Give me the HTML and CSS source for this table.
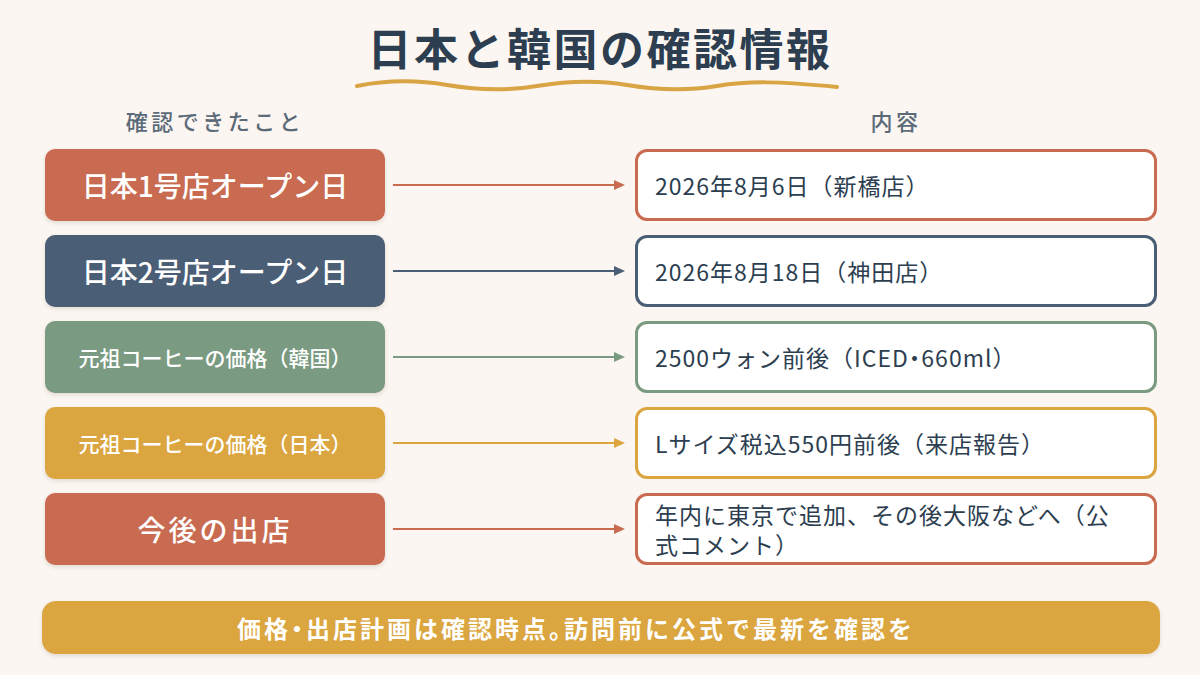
FILE: index.html
```html
<!DOCTYPE html>
<html lang="ja">
<head>
<meta charset="utf-8">
<title>日本と韓国の確認情報</title>
<link rel="stylesheet" href="styles.css">
</head>
<body>
<div class="page">
  <header class="head">
    <h1 class="title">日本と韓国の確認情報</h1>
    <svg class="wave" width="486" height="14" viewBox="0 0 486 14" aria-hidden="true">
      <path d="M3 7 C 33 1, 63 1, 93 6 S 153 12, 183 7 S 243 1, 273 6 S 333 12, 363 7 S 423 2, 483 8" fill="none" stroke="#d9a443" stroke-width="4" stroke-linecap="round"/>
    </svg>
  </header>

  <div class="grid">
    <div class="col-head">確認できたこと</div>
    <div></div>
    <div class="col-head">内容</div>

    <div class="label c-terra">日本1号店オープン日</div>
    <div class="arrow a-terra"><span class="line"></span><span class="head-tri"></span></div>
    <div class="value b-terra">2026年8月6日（新橋店）</div>

    <div class="label c-slate">日本2号店オープン日</div>
    <div class="arrow a-slate"><span class="line"></span><span class="head-tri"></span></div>
    <div class="value b-slate">2026年8月18日（神田店）</div>

    <div class="label small c-sage">元祖コーヒーの価格（韓国）</div>
    <div class="arrow a-sage"><span class="line"></span><span class="head-tri"></span></div>
    <div class="value b-sage"><span>2500ウォン前後（ICED<span class="half">・</span>660ml）</span></div>

    <div class="label small c-gold">元祖コーヒーの価格（日本）</div>
    <div class="arrow a-gold"><span class="line"></span><span class="head-tri"></span></div>
    <div class="value b-gold">Lサイズ税込550円前後（来店報告）</div>

    <div class="label wide c-terra">今後の出店</div>
    <div class="arrow a-terra"><span class="line"></span><span class="head-tri"></span></div>
    <div class="value b-terra"><span class="wrap">年内に東京で追加、その後大阪などへ（公式コメント）</span></div>
  </div>

  <div class="banner">価格<span class="half">・</span>出店計画は確認時点<span class="half">。</span>訪問前に公式で最新を確認を</div>
</div>
</body>
</html>
```

FILE: styles.css
```css
* { box-sizing: border-box; }
html, body { margin: 0; padding: 0; }
body {
  background: #fbf6f1;
  font-family: "Noto Sans CJK JP", "Noto Sans", sans-serif;
  color: #2c3e50;
}
.page {
  width: 1200px;
  height: 675px;
  overflow: hidden;
  background: #fbf6f1;
}
.head {
  padding-top: 21px;
  text-align: center;
}
.title {
  margin: 0;
  font-size: 44px;
  line-height: 52px;
  font-weight: 700;
  letter-spacing: 2.5px;
  color: #2c3e50;
}
.wave {
  display: block;
  margin: 6px auto 0;
  position: relative;
  left: -3px;
}
.grid {
  display: grid;
  grid-template-columns: 340px 250px 522px;
  grid-auto-rows: 72px;
  grid-template-rows: 30px;
  row-gap: 14px;
  margin: 12px 0 0 45px;
}
.col-head {
  text-align: center;
  font-size: 22px;
  line-height: 30px;
  font-weight: 500;
  letter-spacing: 3.5px;
  color: #5b6a79;
}
.label {
  display: flex;
  align-items: center;
  justify-content: center;
  border-radius: 10px;
  color: #ffffff;
  font-size: 28px;
  font-weight: 500;
  box-shadow: 0 2px 4px rgba(90, 60, 40, 0.14);
}
.label.small { font-size: 21px; }
.label.wide { letter-spacing: 3px; }
.c-terra { background: #c96b51; }
.c-slate { background: #4a5e75; }
.c-sage { background: #7a9a81; }
.c-gold { background: #dba540; }

.arrow {
  display: flex;
  align-items: center;
  padding: 0 10px 0 8px;
}
.arrow .line {
  flex: 1;
  height: 2px;
  background: currentColor;
}
.arrow .head-tri {
  width: 0;
  height: 0;
  border-top: 5px solid transparent;
  border-bottom: 5px solid transparent;
  border-left: 11px solid currentColor;
}
.a-terra { color: #c96b51; }
.a-slate { color: #4a5e75; }
.a-sage { color: #7a9a81; }
.a-gold { color: #dba540; }

.value {
  display: flex;
  align-items: center;
  background: #ffffff;
  border: 3px solid;
  border-radius: 12px;
  padding: 0 30px 0 17px;
  font-size: 23px;
  line-height: 30px;
  letter-spacing: 1px;
  color: #2c3e50;
}
.value .wrap { max-width: 462px; }
.half { font-feature-settings: "halt" 1; }
.b-terra { border-color: #c96b51; }
.b-slate { border-color: #4a5e75; }
.b-sage { border-color: #7a9a81; }
.b-gold { border-color: #dba540; }

.banner {
  margin: 36px 40px 0 42px;
  height: 53px;
  padding-right: 50px;
  border-radius: 14px;
  background: #dba540;
  color: #ffffff;
  display: flex;
  align-items: center;
  justify-content: center;
  font-size: 24px;
  font-weight: 700;
  letter-spacing: 3px;
  box-shadow: 0 2px 4px rgba(90, 60, 40, 0.14);
}
```
